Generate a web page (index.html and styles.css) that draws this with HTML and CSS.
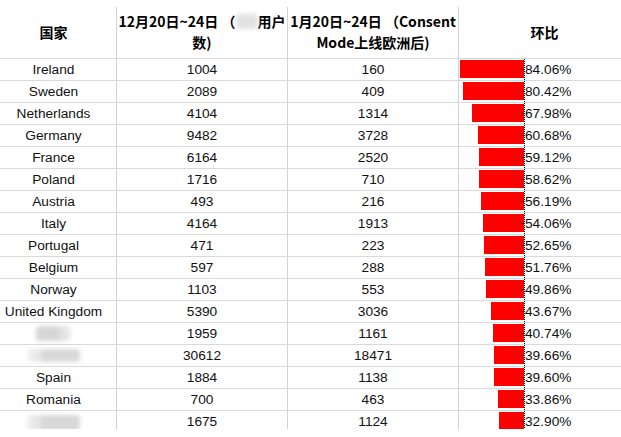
FILE: index.html
```html
<!DOCTYPE html>
<html>
<head>
<meta charset="utf-8">
<link rel="stylesheet" href="styles.css">
</head>
<body>
<div class="frame">
<div class="sheet">
  <div class="cell head c1">国家</div>
  <div class="cell head">12月20日~24日 （<span class="smudge head-smudge"></span>用户<br>数)</div>
  <div class="cell head">1月20日~24日 （Consent<br>Mode上线欧洲后)</div>
  <div class="cell head last">环比</div>

  <div class="cell c1">Ireland</div><div class="cell">1004</div><div class="cell">160</div>
  <div class="cell last bars"><div class="zone"><div class="bar" style="width:64px"></div></div><div class="axis"></div><div class="pct">84.06%</div></div>

  <div class="cell c1">Sweden</div><div class="cell">2089</div><div class="cell">409</div>
  <div class="cell last bars"><div class="zone"><div class="bar" style="width:61px"></div></div><div class="axis"></div><div class="pct">80.42%</div></div>

  <div class="cell c1">Netherlands</div><div class="cell">4104</div><div class="cell">1314</div>
  <div class="cell last bars"><div class="zone"><div class="bar" style="width:52px"></div></div><div class="axis"></div><div class="pct">67.98%</div></div>

  <div class="cell c1">Germany</div><div class="cell">9482</div><div class="cell">3728</div>
  <div class="cell last bars"><div class="zone"><div class="bar" style="width:46px"></div></div><div class="axis"></div><div class="pct">60.68%</div></div>

  <div class="cell c1">France</div><div class="cell">6164</div><div class="cell">2520</div>
  <div class="cell last bars"><div class="zone"><div class="bar" style="width:45px"></div></div><div class="axis"></div><div class="pct">59.12%</div></div>

  <div class="cell c1">Poland</div><div class="cell">1716</div><div class="cell">710</div>
  <div class="cell last bars"><div class="zone"><div class="bar" style="width:45px"></div></div><div class="axis"></div><div class="pct">58.62%</div></div>

  <div class="cell c1">Austria</div><div class="cell">493</div><div class="cell">216</div>
  <div class="cell last bars"><div class="zone"><div class="bar" style="width:43px"></div></div><div class="axis"></div><div class="pct">56.19%</div></div>

  <div class="cell c1">Italy</div><div class="cell">4164</div><div class="cell">1913</div>
  <div class="cell last bars"><div class="zone"><div class="bar" style="width:41px"></div></div><div class="axis"></div><div class="pct">54.06%</div></div>

  <div class="cell c1">Portugal</div><div class="cell">471</div><div class="cell">223</div>
  <div class="cell last bars"><div class="zone"><div class="bar" style="width:40px"></div></div><div class="axis"></div><div class="pct">52.65%</div></div>

  <div class="cell c1">Belgium</div><div class="cell">597</div><div class="cell">288</div>
  <div class="cell last bars"><div class="zone"><div class="bar" style="width:39px"></div></div><div class="axis"></div><div class="pct">51.76%</div></div>

  <div class="cell c1">Norway</div><div class="cell">1103</div><div class="cell">553</div>
  <div class="cell last bars"><div class="zone"><div class="bar" style="width:38px"></div></div><div class="axis"></div><div class="pct">49.86%</div></div>

  <div class="cell c1">United Kingdom</div><div class="cell">5390</div><div class="cell">3036</div>
  <div class="cell last bars"><div class="zone"><div class="bar" style="width:33px"></div></div><div class="axis"></div><div class="pct">43.67%</div></div>

  <div class="cell c1"><span class="smudge s1"></span></div><div class="cell">1959</div><div class="cell">1161</div>
  <div class="cell last bars"><div class="zone"><div class="bar" style="width:31px"></div></div><div class="axis"></div><div class="pct">40.74%</div></div>

  <div class="cell c1"><span class="smudge s2"></span></div><div class="cell">30612</div><div class="cell">18471</div>
  <div class="cell last bars"><div class="zone"><div class="bar" style="width:30px"></div></div><div class="axis"></div><div class="pct">39.66%</div></div>

  <div class="cell c1">Spain</div><div class="cell">1884</div><div class="cell">1138</div>
  <div class="cell last bars"><div class="zone"><div class="bar" style="width:30px"></div></div><div class="axis"></div><div class="pct">39.60%</div></div>

  <div class="cell c1">Romania</div><div class="cell">700</div><div class="cell">463</div>
  <div class="cell last bars"><div class="zone"><div class="bar" style="width:26px"></div></div><div class="axis"></div><div class="pct">33.86%</div></div>

  <div class="cell c1"><span class="smudge s3"></span></div><div class="cell">1675</div><div class="cell">1124</div>
  <div class="cell last bars"><div class="zone"><div class="bar" style="width:25px"></div></div><div class="axis"></div><div class="pct">32.90%</div></div>
</div>
</div>
</body>
</html>
```

FILE: styles.css
```css
html, body {
  margin: 0;
  padding: 0;
  background: #ffffff;
  overflow: hidden;
}

.frame {
  width: 630px;
  height: 429px;
  padding-top: 7px;
  box-sizing: border-box;
  overflow: hidden;
}

.sheet {
  display: grid;
  grid-template-columns: 117px 171px 171px 171px;
  grid-auto-rows: 22px;
  grid-template-rows: 52px;
  font-family: "Liberation Sans", Arial, sans-serif;
  font-size: 13.7px;
  color: #111111;
}

.cell {
  box-sizing: border-box;
  border-right: 1px solid #d2d2d2;
  border-bottom: 1px solid #d9d9d9;
  display: flex;
  align-items: center;
  justify-content: center;
  white-space: nowrap;
  line-height: 21px;
}

.cell.last {
  border-right: none;
}

.c1 {
  padding-right: 9px;
}

.head {
  font-family: "Noto Sans CJK SC", "Liberation Sans", sans-serif;
  font-weight: bold;
  font-size: 14px;
  line-height: 21px;
  text-align: center;
  color: #000000;
  flex-direction: column;
  display: block;
  padding-top: 4px;
}

.head.c1, .head.last {
  display: flex;
  padding-top: 0;
}

.smudge {
  display: inline-block;
  background: #dcdcdc;
  filter: blur(2px);
  border-radius: 4px;
}

.head-smudge {
  width: 22px;
  height: 15px;
  vertical-align: -2px;
  background: #e2e2e2;
}

.s1 {
  width: 35px;
  height: 15px;
  background: linear-gradient(90deg, #d6d6d6 0%, #d6d6d6 55%, #eeeeee 100%);
}

.s2 {
  width: 52px;
  height: 13px;
  background: linear-gradient(90deg, #efefef 0%, #e6e6e6 22%, #d8d8d8 30%, #d8d8d8 100%);
}

.s3 {
  width: 53px;
  height: 16px;
  margin-top: 3px;
  background: linear-gradient(90deg, #eeeeee 0%, #e6e6e6 22%, #d8d8d8 30%, #d8d8d8 100%);
}

.bars {
  justify-content: flex-start;
  align-items: stretch;
}

.zone {
  width: 65px;
  display: flex;
  justify-content: flex-end;
  align-items: flex-start;
}

.bar {
  height: 18px;
  margin-top: 1px;
  background: #ff0000;
}

.axis {
  width: 0;
  border-left: 1px dotted #000000;
  position: relative;
}

.axis::after {
  content: "";
  position: absolute;
  left: -4px;
  top: 10px;
  width: 4px;
  height: 1px;
  background: #222222;
}

.pct {
  align-self: center;
  margin-left: 0;
}
```
